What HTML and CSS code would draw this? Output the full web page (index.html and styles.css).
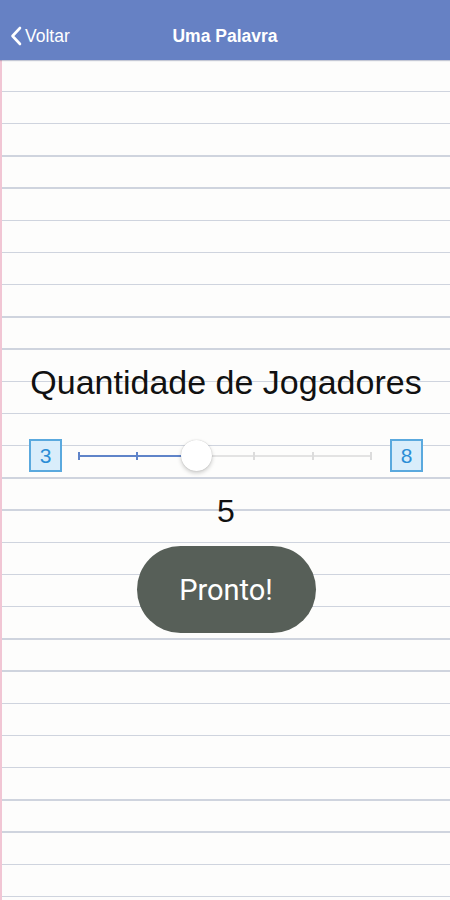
FILE: index.html
```html
<!DOCTYPE html>
<html lang="pt">
<head>
    <meta charset="UTF-8">
    <meta name="viewport" content="width=device-width, initial-scale=1.0">
    <title>Uma Palavra</title>
    <link rel="stylesheet" href="styles.css">
</head>
<body>
    <div class="screen">
        <header class="nav-bar">
            <a class="back" href="#">
                <svg class="back-icon" width="12" height="20" viewBox="0 0 12 20">
                    <path d="M10 2 L2.5 10 L10 18" fill="none" stroke="#fff" stroke-width="2.6" stroke-linecap="round" stroke-linejoin="round"/>
                </svg>
                <span>Voltar</span>
            </a>
            <div class="nav-title">Uma Palavra</div>
            <div></div>
        </header>

        <main class="paper">
            <h1 class="question">Quantidade de Jogadores</h1>

            <div class="slider-row">
                <div class="limit">3</div>
                <div class="slider" id="slider">
                    <div class="track"></div>
                    <div class="track-fill" id="trackFill"></div>
                    <div class="ticks" id="ticks"></div>
                    <div class="thumb" id="thumb"></div>
                </div>
                <div class="limit">8</div>
            </div>

            <div class="count" id="count">5</div>

            <button type="button" class="ready">Pronto!</button>
        </main>
    </div>

    <script>
        // players from 3 to 8, currently 5
        const min = 3;
        const max = 8;
        let value = 5;

        const ticks = document.getElementById('ticks');
        for (let i = min; i <= max; i++) {
            const tick = document.createElement('span');
            tick.className = 'tick';
            ticks.appendChild(tick);
        }

        function render() {
            const pct = (value - min) / (max - min) * 100;
            document.getElementById('trackFill').style.width = pct + '%';
            document.getElementById('thumb').style.left = pct + '%';
            document.getElementById('count').textContent = value;
        }

        render();
    </script>
</body>
</html>
```

FILE: styles.css
```css
* {
    box-sizing: border-box;
}
body {
    margin: 0;
    font-family: "Liberation Sans", Arial, sans-serif;
    background-color: #fdfdfc;
}
.screen {
    width: 450px;
    height: 900px;
    display: flex;
    flex-direction: column;
    overflow: hidden;
}
.nav-bar {
    height: 60px;
    padding-top: 12px;
    background-color: #6681c4;
    display: grid;
    grid-template-columns: 1fr auto 1fr;
    align-items: center;
    box-shadow: 0 1px 1px rgba(90, 100, 140, 0.35);
    position: relative;
    z-index: 1;
}
.back {
    display: flex;
    align-items: center;
    gap: 3px;
    padding-left: 10px;
    color: #fff;
    text-decoration: none;
    font-size: 17.5px;
}
.nav-title {
    color: #fff;
    font-size: 17.5px;
    font-weight: bold;
}
.paper {
    flex: 1;
    display: flex;
    flex-direction: column;
    align-items: center;
    padding-top: 302px;
    border-left: 2px solid #f1c6d4;
    background-image: repeating-linear-gradient(to bottom, transparent 0, transparent 30.7px, #cfd4de 30.7px, #cfd4de 32.2px);
}
.question {
    margin: 0;
    font-size: 34px;
    font-weight: normal;
    line-height: 40px;
    color: #111;
}
.slider-row {
    width: 100%;
    display: flex;
    align-items: center;
    padding: 0 27px 0 27px;
    margin-top: 37px;
}
.limit {
    width: 33px;
    height: 33px;
    border: 2px solid #5aa9de;
    background-color: #d9edfb;
    color: #2b8dd6;
    font-size: 21px;
    display: flex;
    align-items: center;
    justify-content: center;
}
.slider {
    flex: 1;
    position: relative;
    height: 32px;
    margin: 0 18px 0 17px;
}
.track {
    position: absolute;
    left: 0;
    right: 0;
    top: 15px;
    height: 2px;
    background-color: #e3e3e3;
}
.track-fill {
    position: absolute;
    left: 0;
    top: 15px;
    height: 2px;
    background-color: #5f84c9;
}
.ticks {
    position: absolute;
    left: 0;
    right: 0;
    top: 12px;
    height: 8px;
    display: flex;
    justify-content: space-between;
}
.tick {
    width: 2px;
    height: 8px;
    margin-left: -1px;
    background-color: #dcdcdc;
}
.tick:nth-child(-n+2) {
    background-color: #5f84c9;
}
.thumb {
    position: absolute;
    top: 0;
    width: 31px;
    height: 31px;
    margin-left: -15px;
    border-radius: 50%;
    background-color: #fff;
    box-shadow: 0 2px 4px rgba(0, 0, 0, 0.2), 0 0 1px rgba(0, 0, 0, 0.25);
}
.count {
    margin-top: 21px;
    font-size: 32px;
    line-height: 36px;
    color: #111;
}
.ready {
    margin-top: 17px;
    width: 179px;
    height: 87px;
    border: none;
    border-radius: 44px;
    background-color: #575f58;
    color: #fff;
    font-family: Roboto, "Liberation Sans", sans-serif;
    font-size: 29px;
    cursor: pointer;
}
```
